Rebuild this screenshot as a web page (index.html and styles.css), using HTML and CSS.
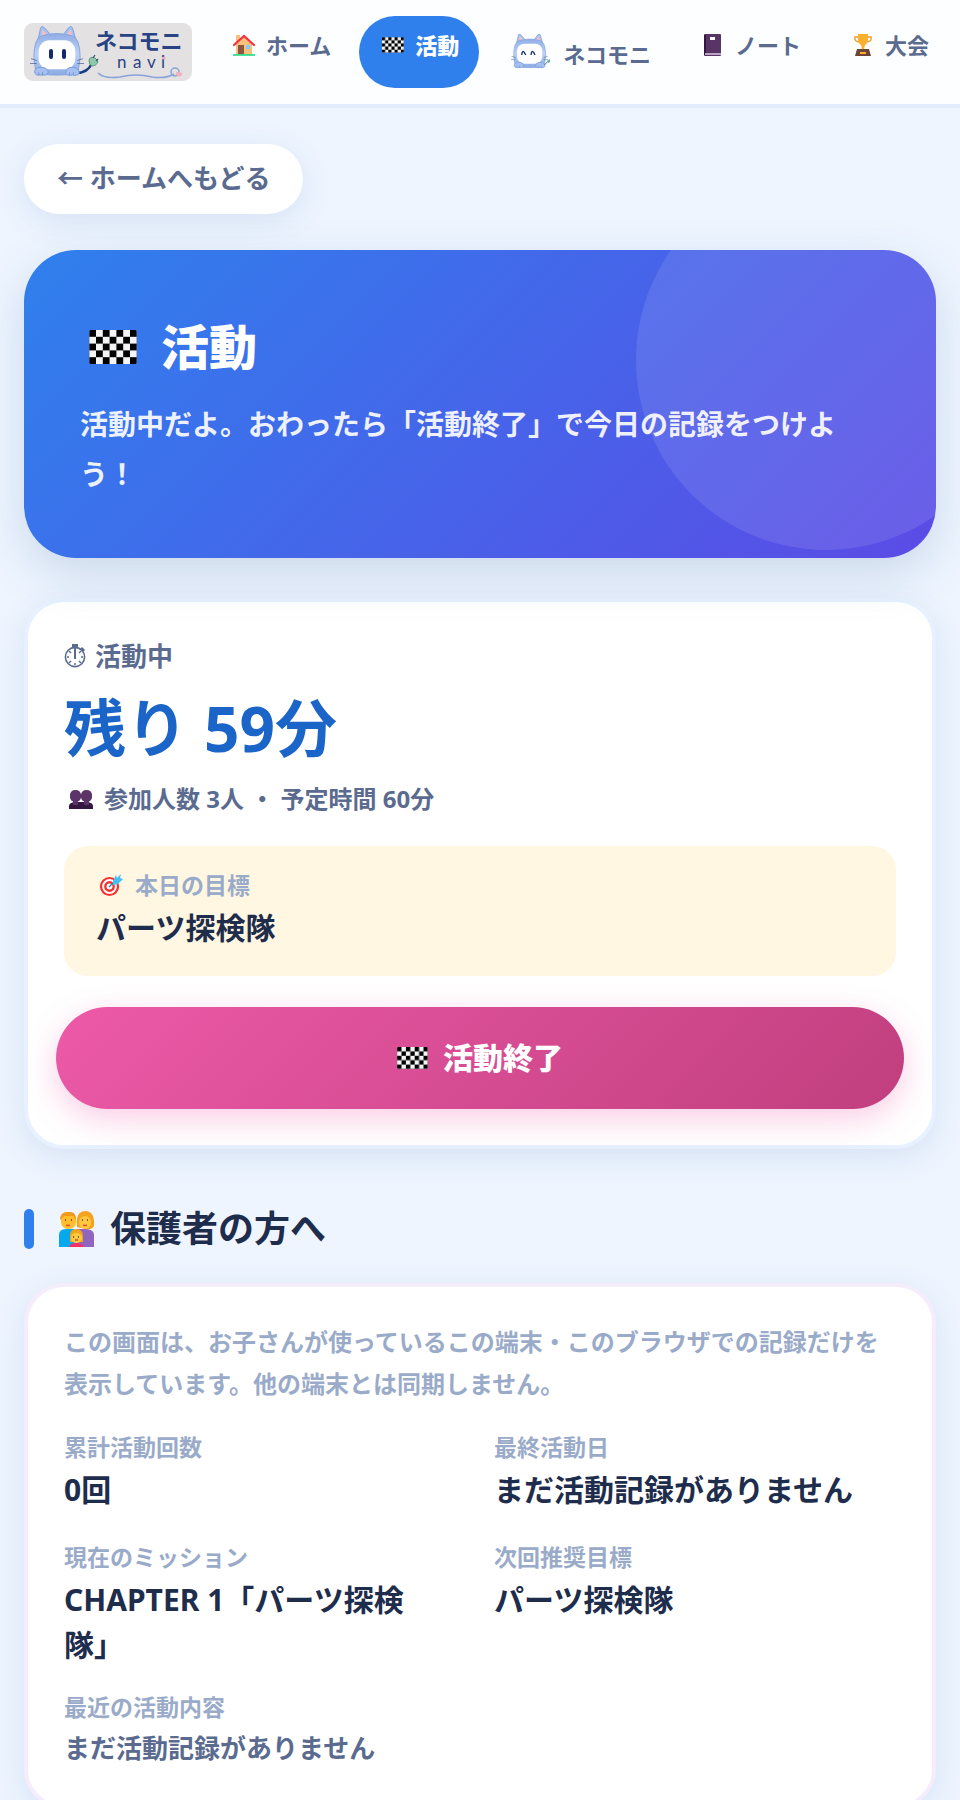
FILE: index.html
```html
<!DOCTYPE html>
<html lang="ja">
<head>
<meta charset="utf-8">
<meta name="viewport" content="width=device-width, initial-scale=1">
<title>活動 | ネコモニ navi</title>
<link rel="stylesheet" href="styles.css">
</head>
<body>
<svg class="defs" width="0" height="0" aria-hidden="true">
  <defs>
    <pattern id="check" width="2" height="2" patternUnits="userSpaceOnUse">
      <rect width="2" height="2" fill="#f4f4f4"/><rect width="1" height="1"/><rect x="1" y="1" width="1" height="1"/>
    </pattern>
    <linearGradient id="fur" x1="0" y1="0" x2="0" y2="1"><stop offset="0" stop-color="#90aee6"/><stop offset=".5" stop-color="#bdd1f6"/><stop offset="1" stop-color="#8babe4"/></linearGradient>
    <symbol id="flag" viewBox="0 0 7 5"><rect width="7" height="5" rx=".25" fill="url(#check)"/></symbol>
    <symbol id="cat" viewBox="0 0 56 54">
      <path d="M8 18 11 4Q12 1 15 4L23 13M33 13 40 4Q43 1 44 4L48 18" fill="#a9c1f1" stroke="#7f9fdc"/>
      <path d="M12 13 13 6 19 12M37 12 42 6 44 13" fill="#f8bfc4"/>
      <path d="M4 35Q4 14 13 12Q28 8 43 12Q52 14 52 35L50 49Q47 53 28 53Q9 53 6 49Z" fill="url(#fur)" stroke="#86a4de"/>
      <rect x="9" y="17" width="38" height="30" rx="11" fill="#fff"/>
      <path d="M1 36 7 38M0 41H7M49 38 55 36M49 41H56" stroke="#51679d" stroke-width=".8"/>
      <path d="M5 51Q4 45 11 45Q19 45 19 51Q17 54 11 53Q6 54 5 51M37 51Q37 45 44 45Q51 45 51 51Q50 54 44 53Q38 54 37 51" fill="#a5c0f1" stroke="#799bda"/>
      <path d="M9 53V50M13 53V50M41 53V50M45 53V50" stroke="#6688c9" stroke-width=".7"/>
    </symbol>
  </defs>
</svg>

<header class="topbar">
  <a class="brand" href="#" aria-label="ネコモニ navi">
    <svg class="brand-art" viewBox="0 0 168 58">
      <rect width="168" height="58" rx="9" fill="#e3e1e1"/>
      <path d="M52 50Q64 50 68 40" fill="none" stroke="#183c86" stroke-width="2.4"/>
      <use href="#cat" x="6" y="0" width="54" height="54"/>
      <rect x="25" y="26" width="4" height="10" rx="2" fill="#15286d"/><rect x="38" y="26" width="4" height="10" rx="2" fill="#15286d"/>
      <path d="M65 37Q66 33 71 35L74 38Q73 43 68 43Q65 42 65 37Z" fill="#8fc8ad" stroke="#5c9c82"/>
      <path d="M69 35 71 32M72 38 74 36" stroke="#3d5865" stroke-width="1.3"/>
      <text class="brand-name" x="71" y="26">ネコモニ</text>
      <text class="brand-sub" x="93 109 123 137" y="45">navi</text>
      <circle cx="140" cy="35" r="1.6" fill="#efa6b9"/>
      <path d="M74 50Q80 56 96 54Q112 50 128 54Q142 56 150 51" fill="none" stroke="#88a2dc" stroke-width="1.5"/>
      <circle cx="151" cy="49" r="4" fill="none" stroke="#88a2dc" stroke-width="1.5"/>
      <path d="M155 54Q150 51 153 49Q155 48 156 50Q158 48 158 52Z" fill="#f3adbd"/>
    </svg>
  </a>
  <nav class="nav">
    <a class="nav-item" href="#">
      <span class="nav-icon"><svg width="22" height="22" viewBox="0 0 22 22"><path d="M3 1h4v7H3zM3 10 11 3l8 7v11H3z" fill="#f6c17d"/><path d="M1 11 11 2l10 9" fill="none" stroke="#f5323d" stroke-width="2.2" stroke-linecap="round"/><path d="M5 11h6v9H5z" fill="#8c5742"/><path d="M13 11h4v4h-4z" fill="#8bcaf4"/><path d="M0 21h22" stroke="#18dc86" stroke-width="1.6"/></svg></span>ホーム</a>
    <a class="nav-item nav-item-on" href="#" aria-current="page">
      <span class="nav-icon"><svg width="22" height="16"><use href="#flag"/></svg></span>活動</a>
    <a class="nav-item nav-item-tall" href="#">
      <span class="nav-icon nav-icon-big"><svg width="40" height="38" viewBox="0 0 60 56"><use href="#cat" width="56" height="54"/><path d="M16 34Q17 26 20 30L22 34M30 34Q31 26 34 30L36 34" fill="none" stroke="#1b2d75" stroke-width="2"/><path d="m50 49 6-6" stroke="#56739e" stroke-width="1.5"/><path d="m54 43 4-3 1 4-3 2z" fill="#67b48d"/></svg></span>ネコモニ</a>
    <a class="nav-item" href="#">
      <span class="nav-icon"><svg width="18" height="22" viewBox="0 0 18 22"><rect width="17" height="22" rx="1" fill="#583467"/><path d="M0 1h2v20H0z" fill="#321940"/><path d="M1 20h16" stroke="#ddc8e8" stroke-width="1.5"/><rect x="6" y="3" width="5" height="3" fill="#fff"/></svg></span>ノート</a>
    <a class="nav-item" href="#">
      <span class="nav-icon"><svg width="18" height="22" viewBox="0 0 18 22"><path d="M4 3H1Q0 8 6 8M14 3h3q1 5-5 5" fill="none" stroke="#f39b27" stroke-width="1.4"/><path d="M4 0h10Q15 9 11 11l-1 4H8l-1-4Q3 9 4 0" fill="#ffb02e"/><path d="M3 15h12l2 7H1z" fill="#6d4538"/><path d="M6 18h6v2H6z" fill="#ffb02e"/></svg></span>大会</a>
  </nav>
</header>

<main class="page">
  <a class="back" href="#">← ホームへもどる</a>

  <section class="hero">
    <h1 class="hero-title"><svg width="48" height="34"><use href="#flag"/></svg>活動</h1>
    <p class="hero-text">活動中だよ。おわったら「活動終了」で今日の記録をつけよう！</p>
  </section>

  <section class="card card-active">
    <p class="status"><svg width="22" height="24" viewBox="0 0 22 24" fill="none" stroke="currentColor"><circle cx="11" cy="13" r="9.6" stroke-width="1.6"/><path d="M11 4v11" stroke-width="2"/><path d="M11 5v2M11 19v2M3 13h2M17 13h2M5 7l2 2M17 7l-2 2M5 19l2-2M17 19l-2-2" stroke-width="1.4"/><path d="M8 1.5h6M17 4l3 3" stroke-width="3"/></svg>活動中</p>
    <p class="remain">残り 59分</p>
    <p class="meta"><svg width="24" height="19" viewBox="0 0 24 19"><path d="M0 19v-3q0-3 5-4h14q5 1 5 4v3z" fill="#34183f"/><rect x="4" y="8" width="5" height="7" fill="#5b3567"/><rect x="15" y="8" width="5" height="7" fill="#5b3567"/><rect x="1" y="0" width="11" height="12" rx="5" fill="#5b3567"/><rect x="12" y="0" width="11" height="12" rx="5" fill="#5b3567"/><path d="M1 6h22" stroke="#5b3567" stroke-width="3"/></svg>参加人数 3人 ・ 予定時間 60分</p>
    <div class="goal">
      <p class="label goal-label"><svg width="24" height="24" viewBox="0 0 24 24"><circle cx="10.500" cy="13.500" r="8.500" fill="#fff" stroke="#f8312f" stroke-width="2.200"/><circle cx="10.500" cy="13.500" r="4.200" fill="none" stroke="#f8312f" stroke-width="2.400"/><path d="m10 14 8-8" stroke="#3588aa" stroke-width="1.500"/><path d="m14 8 3-6 1 3 4-4-1 4 3 1-5 5-5 1z" fill="#46bff4"/></svg>本日の目標</p>
      <p class="value">パーツ探検隊</p>
    </div>
    <button class="finish" type="button"><svg width="31" height="22"><use href="#flag"/></svg>活動終了</button>
  </section>

  <h2 class="section-title"><svg width="36" height="36" viewBox="0 0 36 36"><path d="M0 36V24q0-6 7-6h8l5 18z" fill="#06a9ee"/><path d="M17 36V18h11q7 1 7 6v12z" fill="#9065bf"/><rect x="2" y="1" width="15" height="17" rx="7" fill="#ffbd2c"/><path d="M1 9Q1 0 10 1q7-1 7 8l-3-4H5z" fill="#f19a1c"/><path d="M18 16Q16 0 27 0q9 1 8 15q-2 4-9 3z" fill="#f5a21d"/><rect x="20" y="5" width="12" height="13" rx="6" fill="#ffc83d"/><path d="M11 31V23q1-5 7-5 6 1 6 7v6z" fill="#f5a21d"/><rect x="12" y="22" width="11" height="10" rx="5" fill="#ffca3d"/><path d="M10 36q1-4 7-4t8 4z" fill="#f82e66"/><path d="M6 9h1M12 9h1M23 9h1M28 9h1M14 26h1M19 26h1" stroke="#4d2d22" stroke-width="1.500"/><path d="M7 14q2 1 4 0M24 14q2 1 4 0M16 29h3" fill="none" stroke="#d24833" stroke-width="1.300"/></svg>保護者の方へ</h2>

  <section class="card card-parent">
    <p class="note">この画面は、お子さんが使っているこの端末・このブラウザでの記録だけを表示しています。他の端末とは同期しません。</p>
    <dl class="stats">
      <div><dt class="label">累計活動回数</dt><dd class="value">0回</dd></div>
      <div><dt class="label">最終活動日</dt><dd class="value">まだ活動記録がありません</dd></div>
      <div><dt class="label">現在のミッション</dt><dd class="value">CHAPTER 1「パーツ探検<br>隊」</dd></div>
      <div><dt class="label">次回推奨目標</dt><dd class="value">パーツ探検隊</dd></div>
    </dl>
    <h3 class="label recent-title">最近の活動内容</h3>
    <p class="recent">まだ活動記録がありません</p>
  </section>
</main>
</body>
</html>
```

FILE: styles.css
```css
:root {
  --blue: #2f80ed;
  --ink: #1f2d4d;
  --slate: #5a6b8f;
  --mute: #9aabc9;
}

* { box-sizing: border-box; }

body {
  margin: 0;
  background: #eef5ff;
  color: var(--ink);
  font-family: "Noto Sans", "Noto Sans CJK JP", sans-serif;
  font-weight: 700;
}

h1, h2, h3, p, dl, dd { margin: 0; }
a { color: inherit; text-decoration: none; }
svg { display: block; flex: none; }
.defs { position: absolute; }

.topbar {
  display: flex;
  align-items: center;
  gap: 18px;
  padding: 16px 10px 16px 24px;
  background: #fdfeff;
  border-bottom: 4px solid #e1edfc;
}
.brand { flex: none; }
.brand-art { width: 168px; height: 58px; }
.brand-name { font-family: "Noto Sans CJK JP", sans-serif; font-size: 22px; fill: #284384; }
.brand-sub { font-family: Lato, sans-serif; font-size: 17px; font-weight: 400; fill: #284384; }

.nav { display: flex; flex: 1; gap: 8px; }
.nav-item {
  display: flex;
  gap: 8px;
  padding: 11px 20px 13px;
  border-radius: 36px;
  color: var(--slate);
  font-size: 22px;
  line-height: 36px;
  white-space: nowrap;
}
.nav-item-on { background: var(--blue); color: #fff; font-weight: 900; }
.nav-item-tall { align-items: flex-end; line-height: 42px; }
.nav-icon { display: grid; place-items: center; width: 28px; height: 36px; }
.nav-icon-big { width: 48px; height: 48px; }

.page { padding: 36px 24px 40px; }

.back {
  display: inline-block;
  padding: 11px 33px 13px;
  border-radius: 35px;
  background: #fff;
  box-shadow: 0 8px 32px rgba(47, 90, 160, .12);
  color: var(--slate);
  font-size: 26px;
  line-height: 46px;
  vertical-align: top;
}

.hero {
  position: relative;
  overflow: hidden;
  margin-top: 36px;
  padding: 56px;
  border-radius: 52px;
  background: linear-gradient(135deg, #2f80ed, #5b4be6);
  box-shadow: 0 16px 48px rgba(47, 90, 140, .18);
  color: #fff;
}
.hero::after {
  content: "";
  position: absolute;
  top: -80px;
  right: -80px;
  width: 380px;
  height: 380px;
  border-radius: 50%;
  background: rgba(255, 255, 255, .1);
}
.hero-title {
  display: flex;
  align-items: center;
  gap: 24px;
  padding-left: 9px;
  font-size: 48px;
  font-weight: 900;
  line-height: 82px;
}
.hero-text {
  margin: 11px 0 3px;
  color: rgba(255, 255, 255, .92);
  font-size: 28px;
  line-height: 50px;
}

.card {
  padding: 36px;
  border: 4px solid #e7f1ff;
  border-radius: 40px;
  background: #fff;
  box-shadow: 0 8px 32px rgba(47, 90, 160, .12);
}
.card-active { margin-top: 40px; padding-top: 34px; }
.card-parent { border-color: #f5ecfc; padding-top: 34px; }

.status {
  display: flex;
  align-items: center;
  gap: 9px;
  color: var(--slate);
  font-size: 26px;
  line-height: 40px;
}
.remain {
  margin-top: 8px;
  color: #1b64c8;
  font-size: 62px;
  line-height: 88px;
}
.meta {
  display: flex;
  align-items: center;
  gap: 11px;
  margin-top: 7px;
  padding-left: 5px;
  color: var(--slate);
  font-size: 24px;
  line-height: 40px;
}
.goal {
  margin-top: 27px;
  padding: 19px 32px 26px;
  border-radius: 24px;
  background: #fff7e1;
}
.label {
  color: var(--mute);
  font-size: 23px;
  font-weight: 700;
  line-height: 40px;
}
.goal-label { display: flex; align-items: center; gap: 12px; padding-left: 3px; }
.value { font-size: 30px; line-height: 45px; }

.finish {
  display: flex;
  align-items: center;
  justify-content: center;
  gap: 15px;
  width: calc(100% + 16px);
  margin: 31px -8px 0;
  padding: 26px;
  border: 0;
  border-radius: 51px;
  background: linear-gradient(135deg, #ed5aa8, #c03f7e);
  box-shadow: 0 10px 32px rgba(237, 90, 168, .3);
  color: #fff;
  font: inherit;
  font-size: 30px;
  font-weight: 900;
  line-height: 50px;
}

.section-title {
  display: flex;
  align-items: center;
  gap: 15px;
  margin: 52px 0 26px;
  font-size: 36px;
  line-height: 56px;
}
.section-title::before {
  content: "";
  width: 10px;
  height: 40px;
  margin-right: 10px;
  border-radius: 5px;
  background: var(--blue);
}

.note {
  color: var(--mute);
  font-size: 24px;
  line-height: 42px;
}
.stats {
  display: grid;
  grid-template-columns: 1fr 1fr;
  gap: 25px 28px;
  margin-top: 22px;
}
.recent-title { margin-top: 20px; }
.recent {
  color: var(--slate);
  font-size: 26px;
  line-height: 42px;
}
```
